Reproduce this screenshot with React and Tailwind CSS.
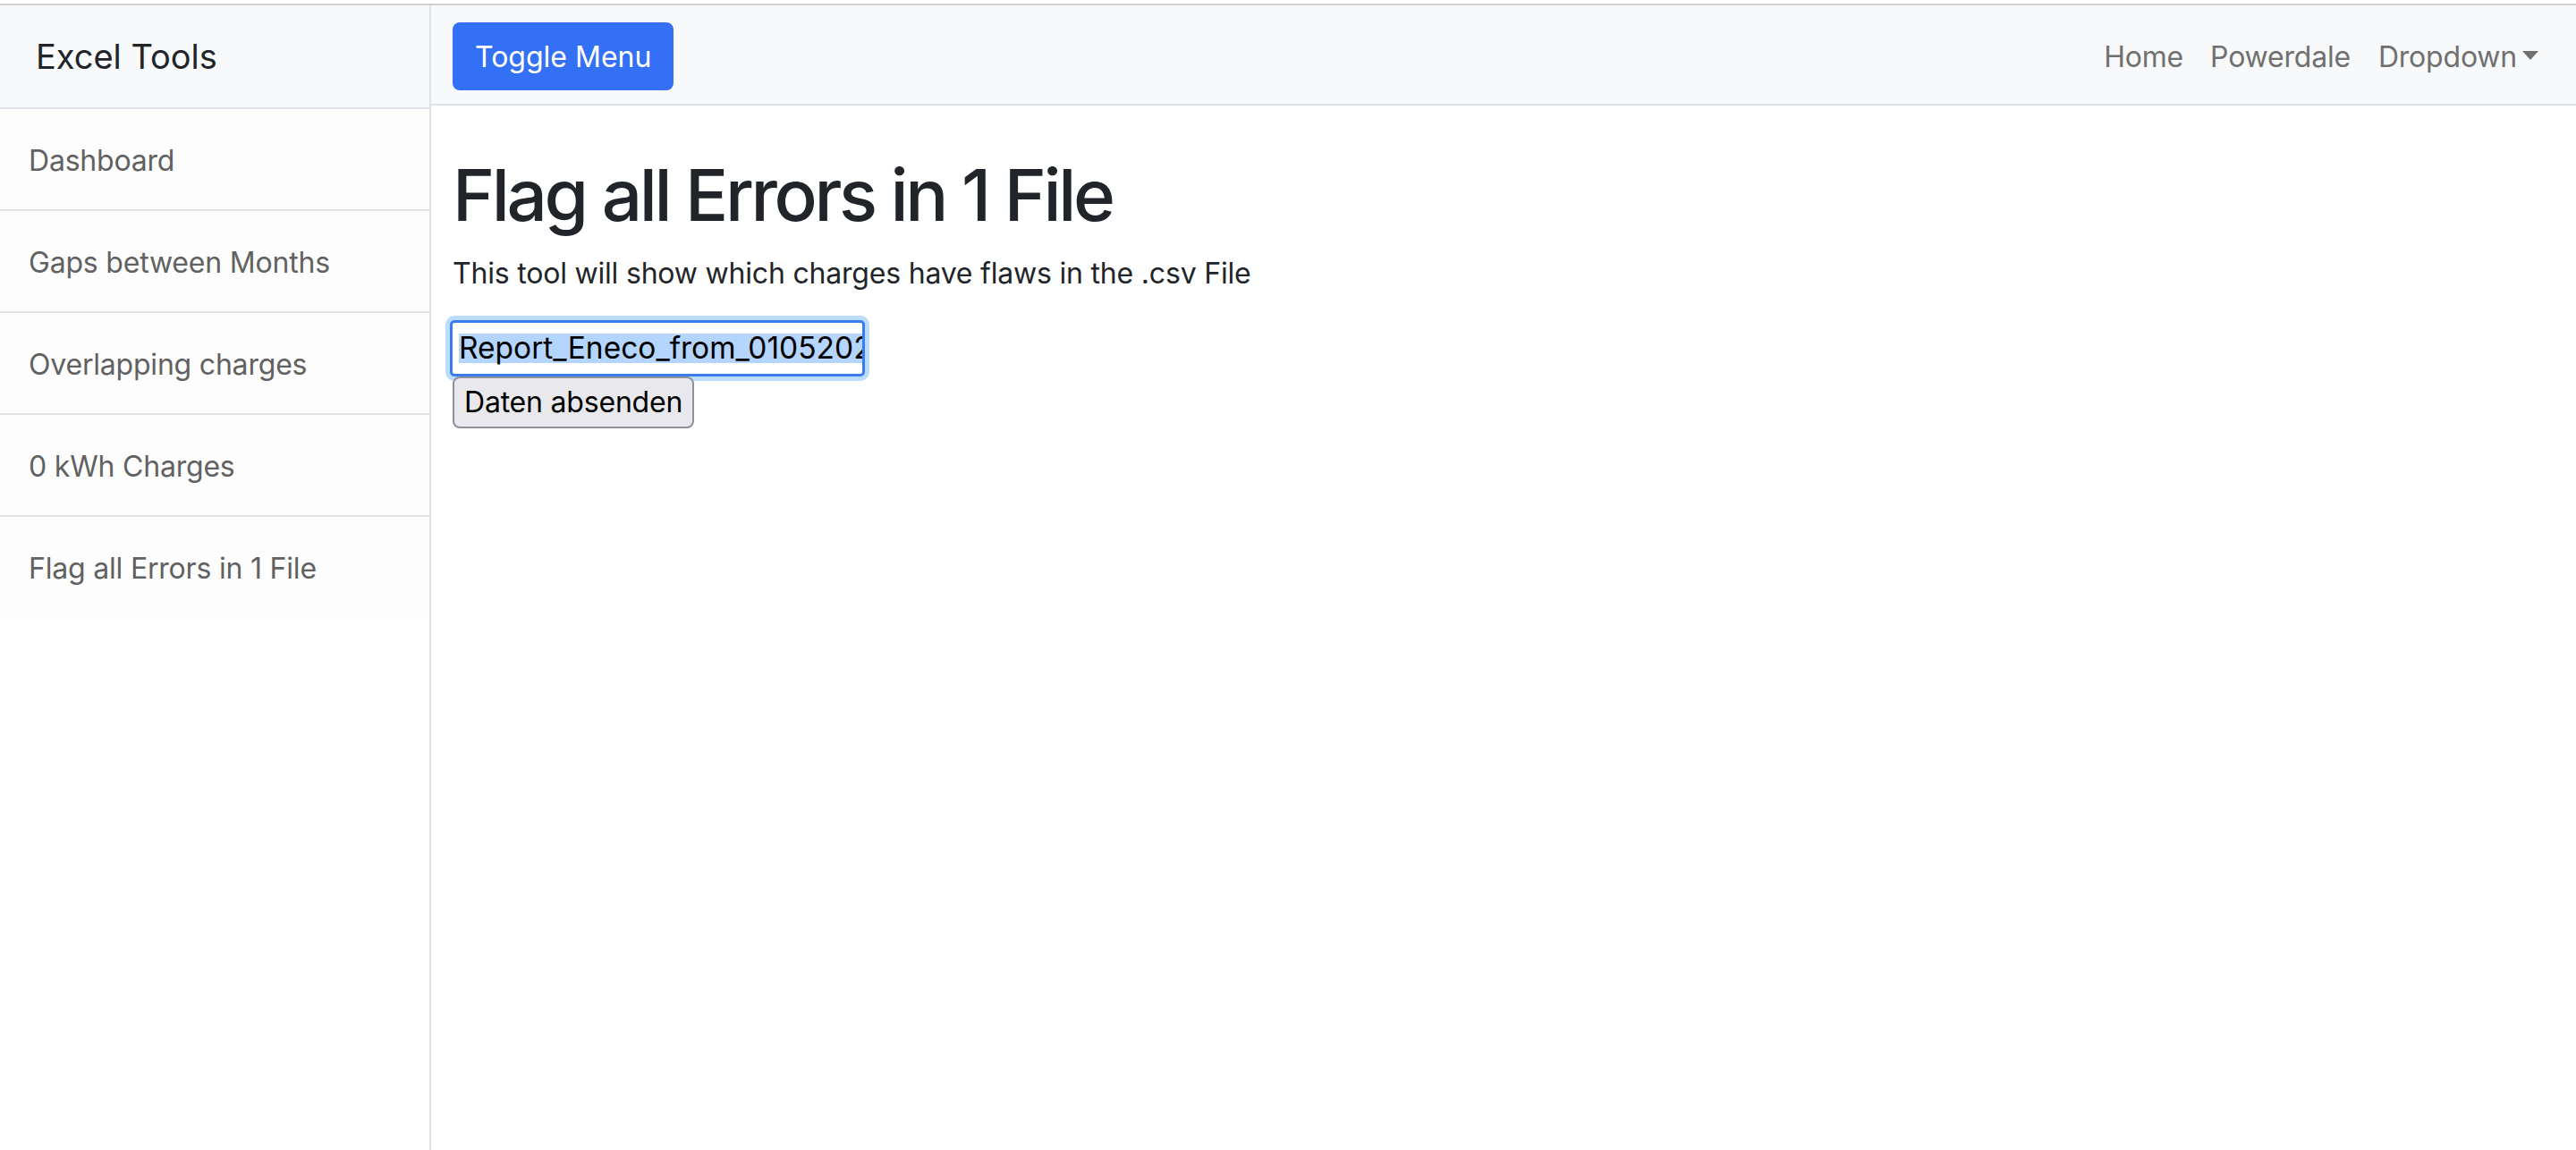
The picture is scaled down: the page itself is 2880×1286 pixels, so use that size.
import React from "react";

const sidebarLinks = [
  "Dashboard",
  "Gaps between Months",
  "Overlapping charges",
  "0 kWh Charges",
  "Flag all Errors in 1 File",
];

const navLinks = ["Home", "Powerdale"];

const Sidebar = () => (
  <aside className="w-[482px] shrink-0 border-r-2 border-[#dee2e6] bg-white">
    <div className="h-[116px] flex items-center px-[40px] bg-[#f8f9fa] border-b-2 border-[#dee2e6] text-[38px] text-[#212529]">
      Excel Tools
    </div>
    <div className="flex flex-col">
      {sidebarLinks.map((label, i) => (
        <a
          key={label}
          href="#"
          className={`flex items-center px-[32px] pt-[3px] bg-[#fdfdfd] text-[32px] text-[#616161] tracking-[-0.2px] ${
            i === sidebarLinks.length - 1
              ? "h-[112px]"
              : "h-[114px] border-b-2 border-[#e2e2e2]"
          }`}
        >
          {label}
        </a>
      ))}
    </div>
  </aside>
);

const TopNav = () => (
  <nav className="h-[112px] shrink-0 flex items-center justify-between px-[24px] pt-[3px] bg-[#f8f9fa] border-b-2 border-[#dee2e6]">
    <button className="h-[76px] px-[25px] pt-[3px] rounded-[8px] bg-[#3470f6] text-white text-[32px]">
      Toggle Menu
    </button>
    <ul className="flex items-center pt-[3px] text-[32px] text-[#707070] tracking-[-0.2px]">
      {navLinks.map((label) => (
        <li key={label}>
          <a href="#" className="block px-[15px] py-[16px]">
            {label}
          </a>
        </li>
      ))}
      <li>
        <a href="#" className="flex items-center pl-[16px] pr-[18px] py-[16px]">
          Dropdown
          <svg width="18" height="10" viewBox="0 0 18 10" className="ml-[6px] mt-[-4px]">
            <polygon points="0,0 18,0 9,10" fill="#707070" />
          </svg>
        </a>
      </li>
    </ul>
  </nav>
);

export default function App() {
  return (
    <div className="w-[2880px] h-[1286px] flex flex-col overflow-hidden bg-white font-[Inter,'Liberation_Sans',sans-serif]">
      <div className="h-[4px] shrink-0 bg-white" />
      <div className="h-[2px] shrink-0 bg-[#cfcfcf]" />
      <div className="flex flex-1 min-h-0">
        <Sidebar />
        <div className="flex-1 flex flex-col">
          <TopNav />
          <main className="px-[24px] text-[#212529]">
            <h1 className="mt-[52px] mb-[16px] text-[80px] leading-[96px] font-medium tracking-[-3.4px]">
              Flag all Errors in 1 File
            </h1>
            <p className="text-[32px] leading-[48px] mb-[28px] tracking-[-0.2px]">
              This tool will show which charges have flaws in the .csv File
            </p>
            <form className="flex flex-col items-start" onSubmit={(e) => e.preventDefault()}>
              <div className="ml-[-3px] w-[464px] h-[63px] flex items-center pl-[7px] pr-[4px] border-[3px] border-[#3a7bf0] rounded-[5px] bg-white ring-[5px] ring-[#bcdcfb] overflow-hidden">
                <span className="whitespace-nowrap bg-[#b4d5fe] text-black text-[33.5px] leading-[33px]">
                  Report_Eneco_from_01052023_to_31052023.csv
                </span>
              </div>
              <button
                type="submit"
                className="h-[58px] px-[11px] border-2 border-[#8f8f9d] rounded-[8px] bg-[#e9e9ed] text-black text-[32px] tracking-[-0.2px]"
              >
                Daten absenden
              </button>
            </form>
          </main>
        </div>
      </div>
    </div>
  );
}
